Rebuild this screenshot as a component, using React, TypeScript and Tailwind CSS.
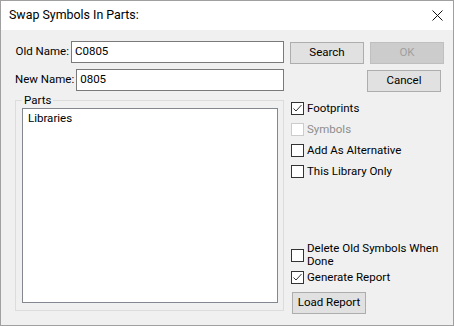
import React from 'react';

const font = { fontFamily: 'Roboto, "Liberation Sans", sans-serif' };

const Check: React.FC<{ checked?: boolean; disabled?: boolean; label: React.ReactNode; className?: string }> = ({
  checked,
  disabled,
  label,
  className = '',
}) => (
  <div className={`flex items-center gap-[3px] ${className}`}>
    <span
      className={`w-[13px] h-[13px] shrink-0 border bg-white flex items-center justify-center ${
        disabled ? 'border-[#cccccc]' : 'border-[#333333]'
      }`}
    >
      {checked && (
        <svg width="11" height="11" viewBox="0 0 11 11">
          <path d="M1.5 5.5 L4 8 L9.5 2" fill="none" stroke="#333333" strokeWidth="1" />
        </svg>
      )}
    </span>
    <span className={`leading-[13px] whitespace-nowrap ${disabled ? 'text-[#8d8d8d]' : 'text-black'}`}>{label}</span>
  </div>
);

const Btn: React.FC<{ children: React.ReactNode; disabled?: boolean; className?: string }> = ({
  children,
  disabled,
  className = '',
}) => (
  <button
    className={`w-[74px] h-[22px] border flex items-center justify-center ${
      disabled ? 'bg-[#cccccc] border-[#bfbfbf] text-[#a0a0a0]' : 'bg-[#e1e1e1] border-[#adadad] text-black'
    } ${className}`}
  >
    {children}
  </button>
);

export default function App() {
  return (
    <div
      style={font}
      className="w-[454px] h-[326px] border border-[#a0a0a0] bg-[#f0f0f0] flex flex-col text-[11.5px] text-black"
    >
      {/* title bar */}
      <div className="h-[29px] bg-white flex items-center justify-between pl-[8px] pr-[10px] shrink-0">
        <span className="text-[12.4px]">Swap Symbols In Parts:</span>
        <svg width="11" height="11" viewBox="0 0 11 11">
          <path d="M0.5 0.5 L10.5 10.5 M10.5 0.5 L0.5 10.5" stroke="#111" strokeWidth="1" />
        </svg>
      </div>

      <div className="flex flex-1 pt-[11px] pl-[14px]">
        {/* left column */}
        <div className="w-[269px] flex flex-col">
          <div className="flex items-center justify-end gap-[2px] h-[22px]">
            <span className="whitespace-nowrap">Old Name:</span>
            <div className="w-[213px] h-[22px] bg-white border border-[#7a7a7a] flex items-center pl-[3px]">C0805</div>
          </div>
          <div className="flex items-center justify-end gap-[2px] h-[22px] mt-[6px]">
            <span className="whitespace-nowrap">New Name:</span>
            <div className="w-[213px] h-[22px] bg-white border border-[#7a7a7a] flex items-center pl-[3px]">0805</div>
          </div>
          <div className="relative mt-[9px] h-[211px] border border-[#dcdcdc] pt-[7px] pl-[6px] pr-[5px] pb-[7px]">
            <span className="absolute left-[6px] top-[-8px] bg-[#f0f0f0] px-[2px] leading-[14px]">Parts</span>
            <div className="h-full bg-white border border-[#828790] pl-[5px] pt-[1px]">Libraries</div>
          </div>
        </div>

        {/* right column */}
        <div className="flex flex-col pl-[6px] pt-[1px] pb-[11px] w-[160px]">
          <div className="flex gap-[6px]">
            <Btn>Search</Btn>
            <Btn disabled>OK</Btn>
          </div>
          <div className="flex justify-end pr-[3px] mt-[6px]">
            <Btn>Cancel</Btn>
          </div>
          <div className="flex flex-col gap-[8px] mt-[10px] pl-[1px]">
            <Check checked label="Footprints" />
            <Check disabled label="Symbols" />
            <Check label="Add As Alternative" />
            <Check label="This Library Only" />
          </div>
          <div className="flex-1" />
          <div className="flex flex-col gap-[3px] pl-[1px]">
            <Check label={<>Delete Old Symbols When<br />Done</>} />
            <Check checked label="Generate Report" />
          </div>
          <Btn className="mt-[8px] ml-[2px] w-[72px]">Load Report</Btn>
        </div>
      </div>
    </div>
  );
}
